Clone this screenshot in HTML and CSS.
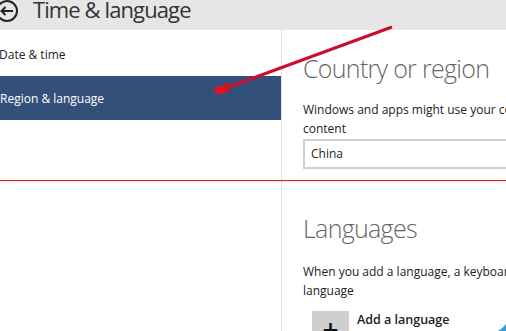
FILE: index.html
```html
<!DOCTYPE html>
<html lang="en">
<head>
    <meta charset="UTF-8">
    <title>Time &amp; language</title>
    <link rel="stylesheet" href="styles.css">
</head>
<body>
    <div class="header">
        <svg class="back" width="26" height="26" viewBox="0 0 26 26">
            <circle cx="10" cy="11" r="10" fill="none" stroke="#222" stroke-width="2"/>
            <path d="M16 11H4.5M8.5 7l-4 4 4 4" fill="none" stroke="#222" stroke-width="2"/>
        </svg>
        <h1>Time &amp; language</h1>
    </div>

    <div class="main">
        <div class="nav">
            <div class="nav-item">Date &amp; time</div>
            <div class="nav-item selected">Region &amp; language</div>
        </div>

        <div class="content">
            <h2 class="country">Country or region</h2>
            <p class="country-text">Windows and apps might use your country or region to give you local<br>content</p>
            <div class="select">China</div>

            <h2 class="languages">Languages</h2>
            <p class="languages-text">When you add a language, a keyboard is also added so you can type in that<br>language</p>
            <div class="add">
                <span class="plus">+</span>
                <span class="add-label">Add a language</span>
            </div>
        </div>
    </div>

    <!-- annotations drawn over the screenshot -->
    <div class="redline"></div>
    <svg class="arrow" width="506" height="331" viewBox="0 0 506 331">
        <path d="M392 27 L226 88" stroke="#c8102e" stroke-width="3" fill="none"/>
        <path d="M214 92 L228 82 L230 92 Z" fill="#d4101e"/>
        <ellipse cx="220" cy="90" rx="6" ry="4" fill="#e0141e"/>
        <path d="M498 331 Q503 328 506 324 L506 331 Z" fill="#3a9ad9"/>
    </svg>
</body>
</html>
```

FILE: styles.css
```css
body { margin: 0; font-family: "Open Sans", "Noto Sans", sans-serif; background: #fff; color: #222; width: 506px; height: 331px; overflow: hidden; }

.header { height: 30px; background: #e6e6e6; display: flex; align-items: flex-start; }
.back { margin-left: -3px; margin-right: 10px; flex: none; }
.header h1 { margin: -3px 0 0; font-size: 22px; line-height: 24px; font-weight: 400; color: #333; letter-spacing: -0.9px; white-space: nowrap; }

.main { display: flex; height: 301px; }
.nav { width: 281px; padding-top: 2px; border-right: 1px solid #e4e4e4; flex: none; }
.nav-item { height: 44px; display: flex; align-items: center; font-size: 12px; margin-left: -1px; color: #222; }
.nav-item.selected { background: #33507a; color: #fff; margin-left: 0; }

.content { padding-left: 21px; white-space: nowrap; }
.content h2 { margin: 0; font-size: 25px; font-weight: 300; color: #666; letter-spacing: -0.7px; line-height: 34px; }
.content p { margin: 0; font-size: 12px; line-height: 19px; color: #222; }

.country { margin-top: 21px !important; }
.country-text { padding-top: 15px; }
.select { margin-top: 1px; width: 220px; height: 26px; border: 2px solid #cfcfcf; font-size: 12px; line-height: 26px; padding-left: 6px; }

.languages { margin-top: 42px !important; }
.languages-text { padding-top: 17px; }

.add { display: flex; align-items: flex-start; margin: 11px 0 0 9px; }
.plus { width: 37px; height: 34px; background: #cfcfcf; margin-right: 8px; font-size: 28px; font-weight: 600; line-height: 36px; text-align: center; color: #111; }
.add-label { font-size: 12.5px; font-weight: 600; line-height: 18px; }

.redline { position: absolute; left: 0; top: 180px; width: 506px; height: 1px; background: #c8242a; box-shadow: 0 1px 2px #f2c8c8; }
.arrow { position: absolute; left: 0; top: 0; }
```
